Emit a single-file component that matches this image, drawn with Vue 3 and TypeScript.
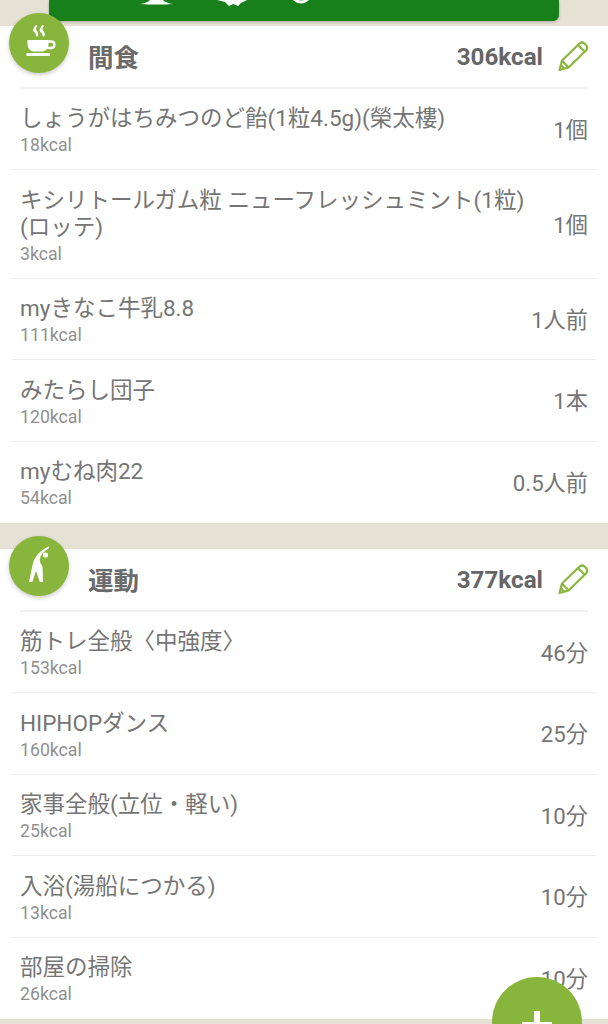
<script setup lang="ts">
interface Row {
  name: string
  kcal: number
  amount: string
}

interface Section {
  title: string
  kcal: number
  icon: 'cup' | 'stretch'
  rows: Row[]
}

const sections: Section[] = [
  {
    title: '間食',
    kcal: 306,
    icon: 'cup',
    rows: [
      { name: 'しょうがはちみつのど飴(1粒4.5g)(榮太樓)', kcal: 18, amount: '1個' },
      { name: 'キシリトールガム粒 ニューフレッシュミント(1粒)(ロッテ)', kcal: 3, amount: '1個' },
      { name: 'myきなこ牛乳8.8', kcal: 111, amount: '1人前' },
      { name: 'みたらし団子', kcal: 120, amount: '1本' },
      { name: 'myむね肉22', kcal: 54, amount: '0.5人前' }
    ]
  },
  {
    title: '運動',
    kcal: 377,
    icon: 'stretch',
    rows: [
      { name: '筋トレ全般〈中強度〉', kcal: 153, amount: '46分' },
      { name: 'HIPHOPダンス', kcal: 160, amount: '25分' },
      { name: '家事全般(立位・軽い)', kcal: 25, amount: '10分' },
      { name: '入浴(湯船につかる)', kcal: 13, amount: '10分' },
      { name: '部屋の掃除', kcal: 26, amount: '10分' }
    ]
  }
]
</script>

<template>
  <div class="page">
    <div class="top">
      <div class="tabs">
        <svg class="tab-icons" width="510" height="21" viewBox="0 0 510 21">
          <path d="M91 4 Q98 3 101 0 H114 Q117 3 124 4 Q108 5 91 4 Z" fill="#fff" />
          <path d="M168 0 L176 2 L180 6 L184 4 L189 6 L192 3 L198 0 Z" fill="#fff" />
          <circle cx="252" cy="-7" r="9" fill="none" stroke="#fff" stroke-width="3" />
        </svg>
      </div>
    </div>

    <section v-for="s in sections" :key="s.title" class="card">
      <div class="badge">
        <svg v-if="s.icon === 'cup'" width="60" height="60" viewBox="0 0 60 60">
          <path d="M27 12 Q22 17 26 20 Q27.500 21.500 27 23.500 L29 23 Q30 20 27.500 17.500 Q26 15.500 28.500 13 Z" fill="#fff" />
          <path d="M33.500 12 Q28.500 17 32.500 20 Q34 21.500 33.500 23.500 L35.500 23 Q36.500 20 34 17.500 Q32.500 15.500 35 13 Z" fill="#fff" />
          <path d="M18.500 27 H39.500 V31 C39.500 35 37 38 33.500 38.500 H24.500 C21 38 18.500 35 18.500 31 Z" fill="#fff" />
          <path d="M39 28.500 H42 C46.500 28.500 46.500 35 42 35 H38" fill="none" stroke="#fff" stroke-width="2.400" />
          <rect x="17.500" y="40" width="23.500" height="3" fill="#fff" />
        </svg>
        <svg v-else width="60" height="60" viewBox="0 0 60 60">
          <circle cx="36.500" cy="19" r="2.600" fill="#fff" />
          <path d="M20 46 L23.500 29 Q24.500 23.500 27.500 20 Q32 14 39.500 10.500 L40.300 12 Q34.500 15 31.500 20.500 Q30 24 31.500 27 L33.500 30.500 L34 46 H30.800 L27 35 L23.300 46 Z" fill="#fff" />
        </svg>
      </div>
      <header class="head">
        <h2>{{ s.title }}</h2>
        <span class="total">{{ s.kcal }}kcal</span>
        <svg class="pen" width="32" height="32" viewBox="0 0 32 32">
          <path d="M2.500 30 L5 20.500 L22.500 3.500 Q25 1.500 27.500 3.500 L29.500 5.500 Q31 8 29 10.500 L11.500 27.500 Z M5 20.500 L11.500 27.500 M21 5 L28 12 M3.800 25 L7 28.500" fill="none" stroke="#8ab83f" stroke-width="2.200" stroke-linejoin="round" />
        </svg>
      </header>
      <div v-for="r in s.rows" :key="r.name" class="row">
        <div class="info">
          <div class="name">{{ r.name }}</div>
          <div class="kcal">{{ r.kcal }}kcal</div>
        </div>
        <div class="amount">{{ r.amount }}</div>
      </div>
    </section>

    <div class="fab"><span class="plus"></span></div>
  </div>
</template>

<style scoped>
.page {
  position: relative;
  width: 608px;
  height: 1024px;
  overflow: hidden;
  background: #e5e1d5;
  font-family: Roboto, "Noto Sans CJK JP", sans-serif;
  color: #757575;
}
.top {
  height: 26px;
  padding: 0 49px;
}
.tabs {
  height: 21px;
  background: #17801a;
  border-radius: 0 0 6px 6px;
  box-shadow: 0 1px 3px rgba(0, 0, 0, 0.25);
}
.tab-icons {
  display: block;
}
.card {
  position: relative;
  background: #fff;
  padding: 0 12px;
  margin-bottom: 26px;
}
.badge {
  position: absolute;
  left: 9px;
  top: -13px;
  width: 60px;
  height: 60px;
  border-radius: 50%;
  background: #88b53b;
  box-shadow: 0 2px 4px rgba(0, 0, 0, 0.2);
}
.badge svg {
  display: block;
}
.head {
  display: flex;
  align-items: center;
  height: 62.5px;
  margin: 0 8px;
  padding-left: 68px;
  border-bottom: 2px solid #f0f0f0;
  box-sizing: border-box;
}
.head h2 {
  flex: 1;
  margin: 0;
  padding-bottom: 2px;
  font-size: 25.500px;
  font-weight: 700;
  color: #6b6b6b;
}
.total {
  font-size: 24.200px;
  font-weight: 700;
  color: #666;
  padding-top: 1px;
}
.pen {
  margin-left: 14px;
  margin-right: -1px;
}
.row {
  display: flex;
  align-items: center;
  justify-content: space-between;
  padding: 0 8px;
  border-bottom: 1px solid #eee;
}
.row:last-child {
  border-bottom-color: transparent;
}
.info {
  width: 515px;
  padding: 16.500px 0 10px;
}
.name {
  font-size: 22.500px;
  line-height: 27px;
}
.kcal {
  font-size: 17.700px;
  line-height: 27px;
  color: #909090;
}
.amount {
  padding-bottom: 2px;
  font-size: 22.200px;
  white-space: nowrap;
}
.fab {
  position: absolute;
  left: 492px;
  top: 977px;
  width: 90px;
  height: 90px;
  border-radius: 50%;
  background: #88b53b;
}
.plus {
  position: absolute;
  left: 42px;
  top: 34px;
  width: 6px;
  height: 30px;
  background: #fff;
}
.plus::after {
  content: "";
  position: absolute;
  left: -12px;
  top: 11px;
  width: 30px;
  height: 6px;
  background: #fff;
}
</style>

<style>
html, body { margin: 0; background: #e5e1d5; }
</style>
